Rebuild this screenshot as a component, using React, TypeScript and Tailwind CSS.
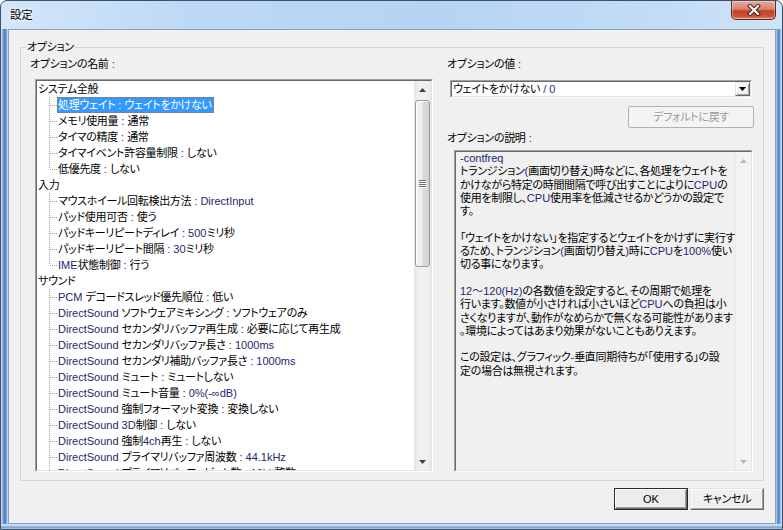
import React from "react";

const LAT = /([\u0020-\u007e：～∞]+)/;

function Txt({ s, sel }: { s: string; sel?: boolean }) {
  const parts = s.split(LAT);
  return (
    <>
      {parts.map((p, i) =>
        i % 2 === 1 ? (
          <span
            key={i}
            className={
              sel
                ? "text-[11px] tracking-normal text-white whitespace-pre"
                : "text-[11px] tracking-normal text-[#1b2872] whitespace-pre"
            }
          >
            {p.replace(/：/g, " : ")}
          </span>
        ) : (
          <React.Fragment key={i}>{p}</React.Fragment>
        )
      )}
    </>
  );
}

const tree: { label: string; children: string[] }[] = [
  {
    label: "システム全般",
    children: [
      "処理ウェイト：ウェイトをかけない",
      "メモリ使用量：通常",
      "タイマの精度：通常",
      "タイマイベント許容量制限：しない",
      "低優先度：しない",
    ],
  },
  {
    label: "入力",
    children: [
      "マウスホイール回転検出方法：DirectInput",
      "パッド使用可否：使う",
      "パッドキーリピートディレイ：500ミリ秒",
      "パッドキーリピート間隔：30ミリ秒",
      "IME状態制御：行う",
    ],
  },
  {
    label: "サウンド",
    children: [
      "PCM デコードスレッド優先順位：低い",
      "DirectSound ソフトウェアミキシング：ソフトウェアのみ",
      "DirectSound セカンダリバッファ再生成：必要に応じて再生成",
      "DirectSound セカンダリバッファ長さ：1000ms",
      "DirectSound セカンダリ補助バッファ長さ：1000ms",
      "DirectSound ミュート：ミュートしない",
      "DirectSound ミュート音量：0%(-∞dB)",
      "DirectSound 強制フォーマット変換：変換しない",
      "DirectSound 3D制御：しない",
      "DirectSound 強制4ch再生：しない",
      "DirectSound プライマリバッファ周波数：44.1kHz",
      "DirectSound プライマリバッファビット数：16bit整数",
    ],
  },
];

const desc: string[] = [
  "-contfreq",
  "トランジション(画面切り替え)時などに、各処理をウェイトを",
  "かけながら特定の時間間隔で呼び出すことによりにCPUの",
  "使用を制限し、CPU使用率を低減させるかどうかの設定で",
  "す。",
  "",
  "「ウェイトをかけない」を指定するとウェイトをかけずに実行す",
  "るため、トランジション(画面切り替え)時にCPUを100%使い",
  "切る事になります。",
  "",
  "12～120(Hz)の各数値を設定すると、その周期で処理を",
  "行います。数値が小さければ小さいほどCPUへの負担は小",
  "さくなりますが、動作がなめらかで無くなる可能性があります",
  "。環境によってはあまり効果がないこともありえます。",
  "",
  "この設定は、グラフィック-垂直同期待ちが「使用する」の設",
  "定の場合は無視されます。",
];

function TreeLines({ last }: { last: boolean }) {
  return (
    <svg width="20" height="16" className="shrink-0">
      <line x1="12.5" y1="0" x2="12.5" y2={last ? 8 : 16} stroke="#a0a0a0" strokeDasharray="1 1" />
      <line x1="13" y1="8.5" x2="20" y2="8.5" stroke="#a0a0a0" strokeDasharray="1 1" />
    </svg>
  );
}

function UpArrow({ color }: { color: string }) {
  return (
    <svg width="7" height="4" viewBox="0 0 7 4">
      <path d="M0 4 L3.5 0 L7 4 Z" fill={color} />
    </svg>
  );
}

function DownArrow({ color }: { color: string }) {
  return (
    <svg width="7" height="4" viewBox="0 0 7 4">
      <path d="M0 0 L7 0 L3.5 4 Z" fill={color} />
    </svg>
  );
}

export default function App() {
  return (
    <div className="w-[783px] h-[530px] flex flex-col rounded-t-[7px] border border-[#3e5068] overflow-hidden bg-[linear-gradient(90deg,#d3e6fa_0%,#bcd8f5_25%,#b6d4f3_55%,#c2dcf6_85%,#d0e4f8_100%)] font-['Liberation_Sans','Noto_Sans_CJK_JP',sans-serif] text-[11px] tracking-[-0.3px] text-black [font-feature-settings:'palt']">
      {/* title bar */}
      <div className="h-[28px] shrink-0 flex items-start">
        <div className="flex-1 pl-[9px] pt-[6px] text-[11.5px] leading-[16px] [text-shadow:0_0_6px_#fff,0_0_3px_#fff]">設定</div>
        <div className="mr-[6px] w-[45px] h-[19px] rounded-b-[5px] border border-t-0 border-[#5c2720] bg-[linear-gradient(180deg,#e9a99b_0%,#d9826f_45%,#c3412a_55%,#cc5338_85%,#e49277_100%)] shadow-[inset_0_0_0_1px_rgba(255,255,255,0.35)] flex items-center justify-center">
          <svg width="14" height="12" viewBox="0 0 14 12">
            <path d="M3 2 L11 10 M11 2 L3 10" stroke="#3b1410" strokeWidth="4" strokeLinecap="square" />
            <path d="M3 2 L11 10 M11 2 L3 10" stroke="#ffffff" strokeWidth="2.2" strokeLinecap="square" />
          </svg>
        </div>
      </div>

      {/* middle */}
      <div className="h-[495px] shrink-0 flex">
        <div className="w-[7px] bg-[linear-gradient(90deg,#d2e2f3_0px,#9ab8e0_1.5px,#4f7ec2_3px,#5f8cca_5px,#bcd5f0_6.5px)]" />
        <div className="w-[768px] border border-[#8ba0b9] bg-[#f0f0f0] flex flex-col px-[11px] pt-[9px]">
          <fieldset className="border border-[#d0d5d9] pl-[9px] pr-[8px] pt-[1px] pb-[8px]">
            <legend className="ml-[-4px] px-[1px] leading-[16px]">オプション</legend>
            <div className="flex gap-[14px]">
              {/* left column */}
              <div className="w-[403px] flex flex-col">
                <div className="leading-[16px] h-[16px]">
                  <Txt s="オプションの名前：" />
                </div>
                <div className="mt-[7px] ml-[5px] h-[393px] border border-t-[#a0a0a0] border-l-[#a0a0a0] border-r-white border-b-white">
                  <div className="h-full border border-t-[#696969] border-l-[#696969] border-r-[#e3e3e3] border-b-[#e3e3e3] bg-white flex">
                    <div className="flex-1 overflow-hidden">
                      {tree.map((g, gi) => (
                        <React.Fragment key={gi}>
                          <div className="h-[16px] flex items-center pl-[1px] whitespace-nowrap leading-[16px]">
                            {g.label}
                          </div>
                          {g.children.map((c, ci) => {
                            const sel = gi === 0 && ci === 0;
                            return (
                              <div key={ci} className="h-[16px] flex items-center whitespace-nowrap">
                                <TreeLines last={ci === g.children.length - 1} />
                                {sel ? (
                                  <span className="h-[16px] flex items-center pl-[1px] pr-[2px] bg-[#3399ff] text-white outline-1 outline-dotted outline-[#c96a10] -outline-offset-1 leading-[16px]">
                                    <Txt s={c} sel />
                                  </span>
                                ) : (
                                  <span className="pl-[1px] leading-[16px]">
                                    <Txt s={c} />
                                  </span>
                                )}
                              </div>
                            );
                          })}
                        </React.Fragment>
                      ))}
                    </div>
                    {/* scrollbar */}
                    <div className="w-[17px] shrink-0 flex flex-col bg-[linear-gradient(90deg,#e3e3e3,#efefef_25%,#f1f1f1_75%,#e9e9e9)]">
                      <div className="h-[17px] flex items-center justify-center">
                        <UpArrow color="#404040" />
                      </div>
                      <div className="mt-[2px] mx-[1px] h-[167px] rounded-[3px] border border-[#9a9a9a] bg-[linear-gradient(90deg,#f5f5f5,#ececec_45%,#dcdcdc_55%,#d2d2d2)] shadow-[inset_1px_1px_0_#fff] flex items-center justify-center">
                        <svg width="8" height="8" viewBox="0 0 8 8">
                          <path d="M0 0.5 H7 M0 2.5 H7 M0 4.5 H7 M0 6.5 H7" stroke="#6e6e6e" strokeWidth="1" />
                          <path d="M1 1.5 H8 M1 3.5 H8 M1 5.5 H8 M1 7.5 H8" stroke="#fafafa" strokeWidth="1" />
                        </svg>
                      </div>
                      <div className="flex-1" />
                      <div className="h-[17px] flex items-center justify-center">
                        <DownArrow color="#404040" />
                      </div>
                    </div>
                  </div>
                </div>
              </div>

              {/* right column */}
              <div className="w-[307px] flex flex-col">
                <div className="leading-[16px] h-[16px]">
                  <Txt s="オプションの値：" />
                </div>
                <div className="mt-[8px] ml-[3px] w-[302px] h-[18px] border border-t-[#a0a0a0] border-l-[#a0a0a0] border-r-white border-b-white">
                  <div className="h-full border border-t-[#696969] border-l-[#696969] border-r-[#e3e3e3] border-b-[#e3e3e3] bg-white flex items-center">
                    <div className="flex-1 pl-[1px] leading-[14px] whitespace-nowrap">
                      <Txt s="ウェイトをかけない / 0" />
                    </div>
                    <div className="w-[15px] h-full shrink-0 border border-t-[#e3e3e3] border-l-[#e3e3e3] border-r-[#696969] border-b-[#696969] bg-[#f0f0f0] flex items-center justify-center shadow-[inset_1px_1px_0_#fff,inset_-1px_-1px_0_#a0a0a0]">
                      <DownArrow color="#000" />
                    </div>
                  </div>
                </div>
                <div className="mt-[8px] self-end w-[126px] h-[22px] rounded-[2px] border border-[#adb2b5] bg-[#f4f4f4] text-[#9a9a9a] flex items-center justify-center leading-[16px]">
                  デフォルトに戻す
                </div>
                <div className="mt-[2px] leading-[16px] h-[16px]">
                  <Txt s="オプションの説明：" />
                </div>
                <div className="mt-[4px] ml-[7px] w-[299px] h-[322px] border border-t-[#a0a0a0] border-l-[#a0a0a0] border-r-white border-b-white">
                  <div className="h-full border border-t-[#696969] border-l-[#696969] border-r-[#e3e3e3] border-b-[#e3e3e3] bg-[#f0f0f0] flex">
                    <div className="flex-1 pl-[4px] overflow-hidden">
                      {desc.map((l, i) => (
                        <div key={i} className="h-[13.3px] leading-[13.3px] whitespace-nowrap">
                          <Txt s={l} />
                        </div>
                      ))}
                    </div>
                    <div className="w-[16px] shrink-0 flex flex-col bg-[#f3f3f3] border-l border-[#e9e9e9]">
                      <div className="h-[17px] flex items-center justify-center">
                        <UpArrow color="#b8b8b8" />
                      </div>
                      <div className="flex-1" />
                      <div className="h-[17px] flex items-center justify-center">
                        <DownArrow color="#b8b8b8" />
                      </div>
                    </div>
                  </div>
                </div>
              </div>
            </div>
          </fieldset>

          <div className="mt-[7px] flex justify-end gap-[2px]">
            <div className="w-[74px] h-[22px] border border-[#2a2a2a]">
              <div className="h-full border border-t-white border-l-white border-r-[#696969] border-b-[#696969] bg-[#ececec] shadow-[inset_-1px_-1px_0_#a0a0a0] flex items-center justify-center leading-[16px]">
                <span className="text-[11px] tracking-normal">OK</span>
              </div>
            </div>
            <div className="w-[74px] h-[22px] border border-t-[#e3e3e3] border-l-[#e3e3e3] border-r-[#696969] border-b-[#696969]">
              <div className="h-full border border-t-white border-l-white border-r-[#a0a0a0] border-b-[#a0a0a0] bg-[#f0f0f0] flex items-center justify-center leading-[16px]">
                キャンセル
              </div>
            </div>
          </div>
        </div>
        <div className="w-[6px] bg-[linear-gradient(90deg,#c4daf2_0px,#6f98cf_1.5px,#5283c5_3px,#9dbde6_4.5px,#cfe2f6_6px)]" />
      </div>

      {/* bottom frame */}
      <div className="flex-1 bg-[linear-gradient(180deg,#c8dcf2_0%,#c3d9f1_35%,#7d9fd0_60%,#90b0dc_80%,#b9d0ec_100%)]" />
    </div>
  );
}
